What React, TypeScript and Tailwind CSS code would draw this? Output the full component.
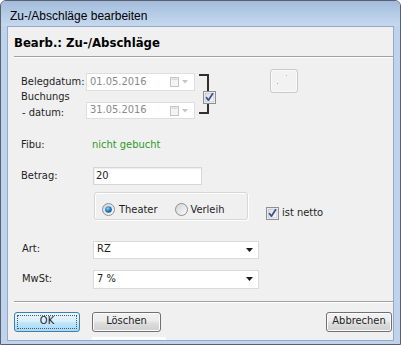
import React from "react";

const ui = { fontFamily: '"DejaVu Sans Condensed", "DejaVu Sans", Verdana, sans-serif' };

function CheckBox({ checked = true }: { checked?: boolean }) {
  return (
    <svg width="13" height="13" viewBox="0 0 13 13" className="block">
      <defs>
        <linearGradient id="cbg" x1="0" y1="0" x2="1" y2="1">
          <stop offset="0" stopColor="#d8dde4" />
          <stop offset="1" stopColor="#f6f7f9" />
        </linearGradient>
      </defs>
      <rect x="0.5" y="0.5" width="12" height="12" fill="#fff" stroke="#8e8f8f" />
      <rect x="2" y="2" width="9" height="9" fill="url(#cbg)" stroke="#a9b1bc" strokeWidth="0.6" />
      {checked && (
        <path d="M3.4 6.6 L5.4 9.2 L9.6 2.8" fill="none" stroke="#3a4f93" strokeWidth="1.7" strokeLinecap="round" strokeLinejoin="round" />
      )}
    </svg>
  );
}

function Radio({ checked }: { checked?: boolean }) {
  return (
    <svg width="13" height="13" viewBox="0 0 13 13" className="block">
      <defs>
        <radialGradient id="rg" cx="0.4" cy="0.35" r="0.7">
          <stop offset="0" stopColor="#9fd6f7" />
          <stop offset="0.5" stopColor="#2a86c7" />
          <stop offset="1" stopColor="#0d4f8e" />
        </radialGradient>
        <linearGradient id="rb" x1="0" y1="0" x2="1" y2="1">
          <stop offset="0" stopColor="#d0d3d8" />
          <stop offset="1" stopColor="#fbfbfb" />
        </linearGradient>
      </defs>
      <circle cx="6.5" cy="6.5" r="6" fill="url(#rb)" stroke="#8e8f8f" />
      {checked && <circle cx="6.5" cy="6.5" r="3.3" fill="url(#rg)" />}
    </svg>
  );
}

function DateField({ value }: { value: string }) {
  return (
    <div className="flex h-full w-[109px] items-center border border-[#dedede] bg-white pl-[3px]">
      <span className="flex-1 text-[#8a8a8a]">{value}</span>
      <svg width="9" height="10" viewBox="0 0 9 10" className="mr-[3px]">
        <rect x="0.5" y="0.5" width="8" height="9" fill="#f4f4f4" stroke="#c4c4c4" />
        <rect x="1.5" y="1.5" width="6" height="1.5" fill="#dcdcdc" />
      </svg>
      <svg width="6" height="4" viewBox="0 0 6 4" className="mr-[6px]">
        <path d="M0 0 H6 L3 3.5 Z" fill="#c6c6c6" />
      </svg>
    </div>
  );
}

function Select({ value, h }: { value: string; h: string }) {
  return (
    <div className={`flex ${h} w-[166px] items-center border border-[#dadada] bg-white pl-[3px]`}>
      <span className="flex-1">{value}</span>
      <svg width="7" height="4" viewBox="0 0 7 4" className="mr-[5px]">
        <path d="M0 0 H7 L3.5 4 Z" fill="#1a1a1a" />
      </svg>
    </div>
  );
}

function Button({ label, focused, w }: { label: string; focused?: boolean; w: string }) {
  if (focused) {
    return (
      <div className={`${w} flex h-[20px] items-center justify-center rounded-[3px] border border-[#3c7fb1] bg-[linear-gradient(#e9f5fc_0%,#d9effc_45%,#bee6fd_55%,#a7d9f5_100%)] p-[2px]`}>
        <div className="flex h-full w-full items-center justify-center border border-dotted border-[#555]">
          {label}
        </div>
      </div>
    );
  }
  return (
    <div className={`${w} flex h-[20px] items-center justify-center rounded-[3px] border border-[#707070] bg-[linear-gradient(#f2f2f2_0%,#ebebeb_45%,#dddddd_55%,#cfcfcf_100%)] shadow-[inset_0_0_0_1px_#fcfcfc]`}>
      {label}
    </div>
  );
}

export default function App() {
  return (
    <div className="relative flex h-[345px] w-[401px] flex-col overflow-hidden rounded-t-[6px] border border-[#58616d] bg-[#bfd4ec] text-[11px] text-[#1e1e1e]" style={ui}>
      {/* title bar */}
      <div className="flex h-[25px] shrink-0 items-center bg-[linear-gradient(#a3bcdb,#b8cee8_60%,#c5d8ee)] pl-[9px] pt-[5px]">
        <span className="text-[12px] text-black" style={{ fontFamily: '"Liberation Sans", Arial, sans-serif' }}>
          Zu-/Abschläge bearbeiten
        </span>
      </div>
      {/* content */}
      <div className="mx-[6px] flex flex-1 flex-col border border-[#93abc8] bg-[#f0f0f0]">
        <div className="flex h-[29px] items-center pl-[6px] pt-[3px]">
          <span className="text-[13px] font-bold text-black">Bearb.: Zu-/Abschläge</span>
        </div>
        <div className="ml-[6px] h-[2px] border-t border-[#a0a0a0] bg-white" />

        {/* date block */}
        <div className="mt-[11px] flex items-start pl-[13px]">
          <div className="mt-[4px] flex flex-col">
            <div className="flex h-[18px] items-center">
              <span className="w-[65px]">Belegdatum:</span>
              <DateField value="01.05.2016" />
            </div>
            <div className="mt-[11px] flex h-[17px] items-start">
              <div className="-mt-[13px] w-[65px] leading-[16px]">
                <div>Buchungs</div>
                <div className="pl-[1px]">- datum:</div>
              </div>
              <DateField value="31.05.2016" />
            </div>
          </div>
          <div className="relative ml-[4px] mt-[5px] h-[40px] w-[10px] border-y-2 border-r-2 border-[#2f2f2f]">
            <div className="absolute left-[4px] top-[15px]">
              <CheckBox />
            </div>
          </div>
          <div className="ml-[61px] flex h-[24px] w-[28px] items-start justify-center rounded-[3px] border border-[#c9c9c9] bg-[#f2f2f2] shadow-[inset_0_0_0_1px_#fafafa]">
            <span className="mt-[13px] ml-[-4px] block h-[1px] w-[1px] bg-[#a8a8a8]" />
            <span className="mt-[5px] ml-[8px] block h-[1px] w-[1px] bg-[#b8b8b8]" />
          </div>
        </div>

        {/* Fibu */}
        <div className="mt-[18px] flex h-[16px] items-center pl-[13px]">
          <span className="w-[71px]">Fibu:</span>
          <span className="text-[#2e9a28]">nicht gebucht</span>
        </div>

        {/* Betrag */}
        <div className="mt-[14px] flex h-[18px] items-center pl-[13px]">
          <span className="w-[72px]">Betrag:</span>
          <div className="flex h-full w-[109px] items-center border border-[#d6d6d6] bg-white pl-[2px] shadow-[inset_1px_1px_0_#eeeeee]">
            20
          </div>
        </div>

        {/* radio group + netto */}
        <div className="mt-[7px] flex items-start pl-[86px]">
          <div className="flex h-[28px] w-[154px] items-end rounded-[3px] border border-[#d8d8d8] pb-[1px] pl-[7px] shadow-[inset_1px_1px_0_#ffffff,1px_1px_0_#ffffff]">
            <div className="flex items-center">
              <Radio checked />
              <span className="ml-[4px]">Theater</span>
              <span className="ml-[17px]"><Radio /></span>
              <span className="ml-[3px]">Verleih</span>
            </div>
          </div>
          <div className="ml-[18px] mt-[13px] flex items-center">
            <CheckBox />
            <span className="ml-[3px]">ist netto</span>
          </div>
        </div>

        {/* Art */}
        <div className="mt-[19px] flex items-center pl-[14px]">
          <span className="w-[71px]">Art:</span>
          <Select value="RZ" h="h-[18px]" />
        </div>
        <div className="mt-[11px] flex items-center pl-[14px]">
          <span className="w-[71px]">MwSt:</span>
          <Select value="7 %" h="h-[19px]" />
        </div>

        <div className="ml-[6px] mt-[12px] h-[2px] border-t border-[#a0a0a0] bg-white" />

        {/* buttons */}
        <div className="mt-[9px] flex items-start pl-[6px] pr-[1px]">
          <Button label="OK" focused w="w-[66px]" />
          <div className="ml-[12px] flex flex-col">
            <Button label="Löschen" w="w-[69px]" />
            <div className="mt-[5px] h-[3px] w-[74px] bg-white" />
          </div>
          <div className="flex-1" />
          <Button label="Abbrechen" w="w-[66px]" />
        </div>
        <div className="flex-1" />
      </div>
      <div className="h-[7px] shrink-0" />
    </div>
  );
}
